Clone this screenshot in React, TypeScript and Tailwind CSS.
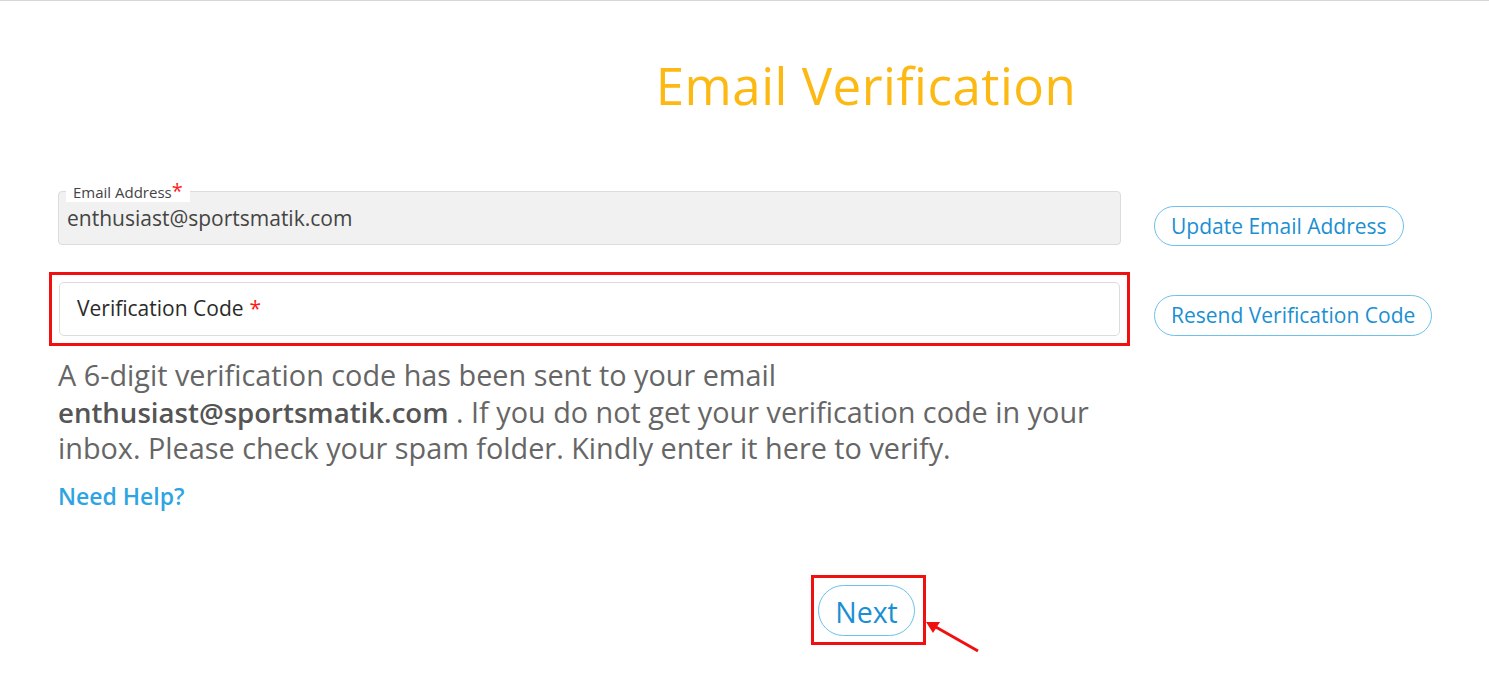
import React from "react"

const font = { fontFamily: '"Open Sans", "Liberation Sans", sans-serif' }

function PillButton({ children, className = "" }: { children: React.ReactNode; className?: string }) {
  return (
    <button
      className={`rounded-full border border-[#6cc0ea] bg-white text-[#1b8fd2] leading-none ${className}`}
    >
      {children}
    </button>
  )
}

export default function App() {
  const email = "enthusiast@sportsmatik.com"

  return (
    <div className="min-h-[681px] w-full border-t border-[#d6d6d6] bg-white" style={font}>
      {/* Titulo */}
      <div className="pl-[243px] pt-[50px]">
        <h1 className="text-center text-[51px] leading-[68px] font-medium tracking-[0.5px] text-[#fdb913]">
          Email Verification
        </h1>
      </div>

      <div className="mt-[72px] flex pl-[58px]">
        {/* Columna izquierda */}
        <div className="w-[1063px]">
          <div className="relative h-[54px] rounded-[4px] border border-[#dcdcdc] bg-[#f1f1f1]">
            <span className="absolute -top-[11px] left-[7px] bg-white px-[7px] text-[15px] leading-[20px] text-[#444]">
              Email Address<span className="text-[20px] leading-none text-[#ff1a1a]">*</span>
            </span>
            <div className="pl-[8px] pt-[13px] text-[21px] leading-[26px] text-[#444]">{email}</div>
          </div>

          <div className="-mx-[9px] mt-[27px] border-[3px] border-[#f01010] p-[7px]">
            <div className="flex h-[54px] items-center rounded-[5px] border border-[#dcdcdc] bg-white pl-[17px] text-[21px] text-[#2a2a2a]">
              Verification Code <span className="ml-[6px] text-[#ff1a1a]">*</span>
            </div>
          </div>

          <p className="mt-[11px] text-[28.8px] leading-[36.5px] text-[#666]">
            A 6-digit verification code has been sent to your email{" "}
            <b className="text-[27.6px] font-semibold text-[#555]">{email}</b> . If you do not get your verification
            code in your inbox. Please check your spam folder. Kindly enter it here to verify.
          </p>

          <a className="mt-[14px] block text-[23px] leading-[30px] font-semibold text-[#2fa4e2]">Need Help?</a>
        </div>

        {/* Botones derecha */}
        <div className="ml-[33px] flex flex-col items-start">
          <PillButton className="mt-[15px] h-[40px] px-[16px] text-[21px]">Update Email Address</PillButton>
          <PillButton className="mt-[49px] h-[41px] px-[16px] text-[21px]">Resend Verification Code</PillButton>
        </div>
      </div>

      {/* Siguiente */}
      <div className="mt-[64.5px] pl-[811px]">
        <div className="relative w-fit">
          <div className="border-[3px] border-[#f01010] pt-[7px] pb-[6px] pl-[4px] pr-[8px]">
            <PillButton className="h-[51px] w-[97px] pt-[3px] text-[28.5px]">Next</PillButton>
          </div>
          <svg
            className="absolute left-[113px] top-[42px]"
            width="56"
            height="36"
            viewBox="0 0 56 36"
          >
            <line x1="54" y1="34" x2="10" y2="9" stroke="#f01010" strokeWidth="3" />
            <polygon points="2,5 16,5 9,16" fill="#f01010" />
          </svg>
        </div>
      </div>
    </div>
  )
}
